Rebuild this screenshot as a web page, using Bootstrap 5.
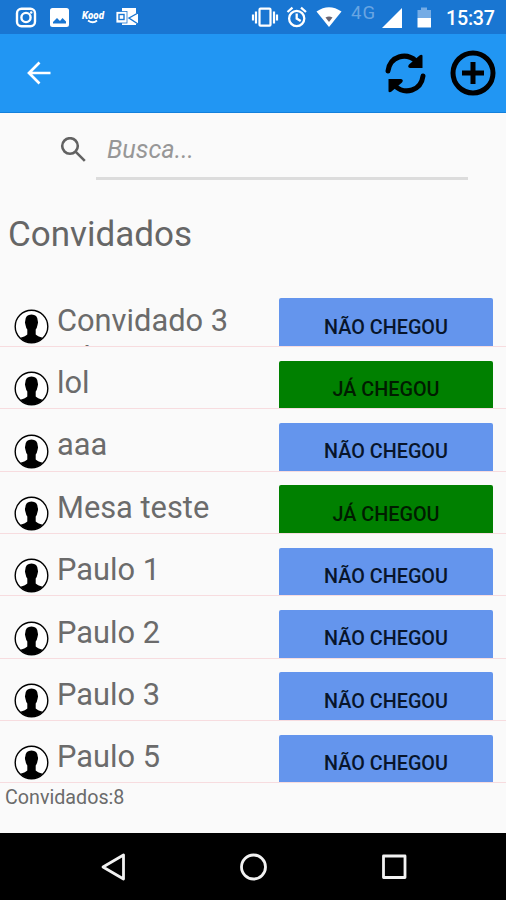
<!DOCTYPE html>
<html lang="pt-BR">
<head>
<meta charset="utf-8">
<meta name="viewport" content="width=device-width, initial-scale=1">
<title>Convidados</title>
<link href="https://cdn.jsdelivr.net/npm/bootstrap@5.3.0/dist/css/bootstrap.min.css" rel="stylesheet">
<style>
body{font-family:Roboto,"Liberation Sans",sans-serif;background:#fafafa;color:#6b6b6b;height:900px}
svg{display:block;flex:none}
.status-bar{height:34px;background:#1976d2}
.status-bar svg{width:506px;height:34px}
.app-bar{height:79px;background:#2196f3;border-bottom:1px solid #1380dc;padding:0 10px 0 22px}
.add-icon{margin-left:23px}
.search-row{height:72px;padding:0 38px 5px 56px}
.search-field{height:67px;border:0;border-bottom:3px solid #dcdcdc;border-radius:0;background:transparent!important;font-size:25.3px;font-style:italic;padding:9px 0 0 11px;box-shadow:none!important}
.search-field::placeholder{color:#979797;opacity:1}
.page-title{font-size:35px;line-height:42px;padding:29px 0 0 8px;height:99.5px;color:#666}
.guest{height:62.35px;border-bottom:1.5px solid #f7dcdf;padding:0 13.5px 0 14px;overflow:hidden}
.guest-icon{margin:24.4px 8px 0 0}
.guest-name{font-size:30.8px;line-height:37.5px;padding-top:17.3px;width:222px}
.guest-btn{width:214px;height:64px;margin-top:13.8px;border:0;border-radius:2px;background:#6495ed!important;color:#08152b!important;font-size:19.8px;line-height:24px;font-weight:500;padding:17.4px 0 0 1px}
.guest-btn.arrived{background:#008000!important;color:#001c00!important}
.summary{font-size:19.7px;line-height:24px;padding:2.9px 0 0 5px;height:49px}
.nav-keys{height:67px;background:#000}
</style>
</head>
<body class="d-flex flex-column m-0 overflow-hidden">
<header>
<div class="status-bar">
<svg viewBox="0 0 506 34" fill="#fff" font-family="Roboto,sans-serif">
<g fill="none" stroke="#fff" stroke-width="2.400"><rect x="17" y="8.700" width="18" height="17.500" rx="4.500"/><circle cx="26" cy="17.500" r="4.600"/></g><circle cx="31.200" cy="12.500" r="1.300"/>
<path fill-rule="evenodd" d="M52.500 8h14q2.500 0 2.500 2.500v14q0 2.500-2.500 2.500h-14q-2.500 0-2.500-2.500v-14q0-2.500 2.500-2.500zM53 23.500h13v-2l-3.500-3.500-2.500 3-3-3-4 4z"/>
<text x="82" y="18.500" font-size="10" font-weight="900" font-style="italic" textLength="22" lengthAdjust="spacingAndGlyphs">Kood</text>
<path d="M88 20.500q5 3.500 9 0" fill="none" stroke="#fff" stroke-width="1.800"/>
<path d="M122 8h14v5l2 1v10h-2v1h-14z"/><path d="m138 13-9 5 9 6" fill="none" stroke="#1976d2" stroke-width="1.400"/><rect x="116" y="11.500" width="11" height="11.500" stroke="#1976d2" stroke-width=".8"/><rect x="119" y="14.500" width="5" height="5" fill="none" stroke="#1976d2" stroke-width="1.400"/>
<g fill="none" stroke="#fff" stroke-width="2.200"><rect x="259.500" y="8.700" width="11" height="17" rx="1"/><path d="M256 11.500v12M274 11.500v12M253 14.500v6M277 14.500v6"/></g>
<g fill="none" stroke="#fff" stroke-width="2.300"><circle cx="296.700" cy="18.500" r="7.600"/><path d="m287.500 12 5-4.300M306 12l-5-4.300M296.700 13.500v5l4 2.500"/></g>
<path d="M316.500 11.500q12.500-8.500 25 0L329 27z"/><path d="M325.500 17.500q3.500-2 7 0l-3.500 4.500z" fill="#6c6570"/>
<text x="351" y="19" font-size="18.500" fill="#68a5e2" textLength="24">4G</text>
<path d="M382 28h20V8z"/>
<path d="M417.500 10h3.500V7.500h6V10h4v8h-13.500z" fill="#75ace5"/><path d="M417.500 18H431v9.500h-13.500z"/>
<text x="446" y="25" font-size="19.700" font-weight="500" textLength="49">15:37</text>
</svg>
</div>
<nav class="app-bar d-flex align-items-center">
<svg class="me-auto" width="34" height="34" viewBox="0 0 34 34" fill="none" stroke="#fff" stroke-width="2.700"><path d="M28.500 17H7.500M17.500 6.500 7 17l10.500 10.500"/></svg>
<svg width="44" height="44" viewBox="0 0 44 44" fill="none" stroke="#000" stroke-width="5" stroke-linecap="round"><path d="M5 20C7 5 23 1 33 10M40 25C38 40 22 44 12 35"/><path d="M39.500 4.500V17H27q-3-.5-1-3.500L36.500 4.500q2-1.500 3 0zM5.500 40.500V28H18q3 .5 1 3.500L8.500 40.500q-2 1.500-3 0z" fill="#000" stroke="none"/></svg>
<svg class="add-icon" width="46" height="46" viewBox="0 0 46 46" fill="none" stroke="#000" stroke-width="5"><circle cx="23" cy="23" r="20"/><path d="M23 12v22M12 23h22"/></svg>
</nav>
</header>
<main class="flex-grow-1">
<div class="search-row d-flex">
<svg class="mt-4" width="40" height="28" viewBox="0 0 40 28" fill="none" stroke="#626262" stroke-width="2.600"><circle cx="14" cy="9" r="7.800"/><path d="m19.800 14.800 9 9"/></svg>
<input class="form-control search-field" placeholder="Busca..." aria-label="Busca">
</div>
<h1 class="page-title fw-normal m-0">Convidados</h1>
<div id="guests"></div>
<div class="summary">Convidados:8</div>
</main>
<footer class="nav-keys">
<svg width="506" height="67" viewBox="0 0 506 67" fill="none" stroke="#f2f2f2" stroke-width="2.800" stroke-linejoin="round"><path d="M123.500 22v24L103 34z"/><circle cx="253.500" cy="34" r="12"/><rect x="383.500" y="23" width="21.500" height="21.500"/></svg>
</footer>
<template id="guest-row">
<div class="guest d-flex align-items-start">
<svg class="guest-icon" width="35" height="35" viewBox="0 0 35 35"><circle cx="17.500" cy="17.500" r="16.300" fill="#fff" stroke="#000" stroke-width="1.400"/><path d="M17.500 5.500q6 0 6.200 6 .8 1.500-.2 4.500-.5 3-1.800 4.500v5q1.500 1.700 7 3.300Q24 33.800 17.500 33.800T6.300 28.800q5.500-1.600 7-3.300v-5q-1.300-1.500-1.800-4.500-1-3-.2-4.500.2-6 6.200-6z"/></svg>
<div class="guest-name"></div>
<button type="button" class="btn guest-btn flex-shrink-0 d-flex justify-content-center align-items-start"></button>
</div>
</template>
<script src="https://cdn.jsdelivr.net/npm/bootstrap@5.3.0/dist/js/bootstrap.bundle.min.js"></script>
<script>
const guests=[["Convidado 3 edit",false],["lol",true],["aaa",false],["Mesa teste",true],["Paulo 1",false],["Paulo 2",false],["Paulo 3",false],["Paulo 5",false]];
for(const [name,arrived] of guests){
  const row=document.getElementById("guest-row").content.cloneNode(true);
  row.querySelector(".guest-name").textContent=name;
  const b=row.querySelector(".guest-btn");
  b.textContent=arrived?"JÁ CHEGOU":"NÃO CHEGOU";
  if(arrived)b.classList.add("arrived");
  document.getElementById("guests").append(row);
}
</script>
</body>
</html>
